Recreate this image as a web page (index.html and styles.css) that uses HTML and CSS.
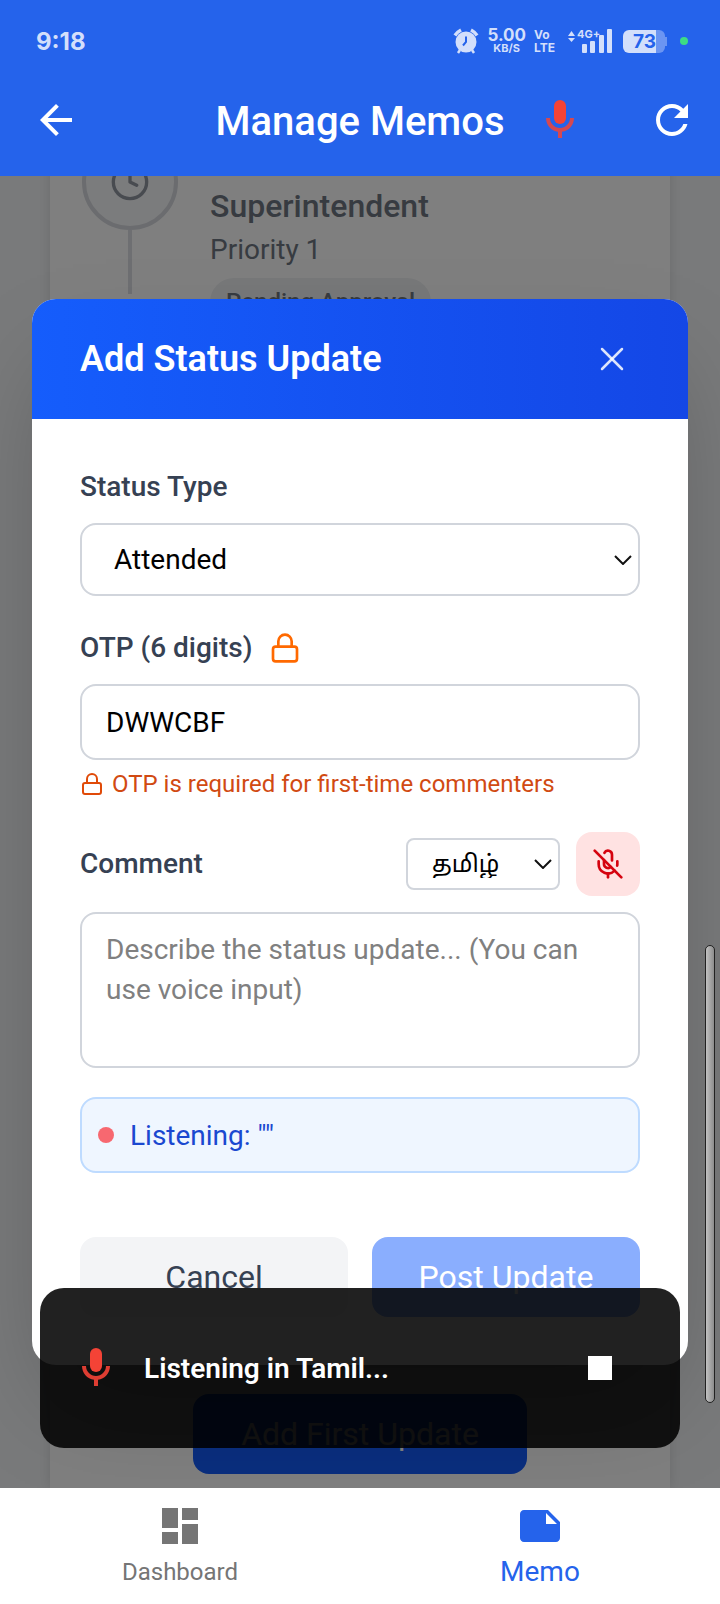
FILE: index.html
```html
<!DOCTYPE html>
<html lang="en">
<head>
<meta charset="utf-8">
<meta name="viewport" content="width=device-width, initial-scale=1">
<title>Manage Memos</title>
<link rel="stylesheet" href="styles.css">
</head>
<body class="app">
  <header class="top">
    <div class="status">
      <span class="clock">9:18</span>
      <div class="status-icons">
        <svg class="alarm" viewBox="0 0 26 26" aria-label="Alarm">
          <path d="M2 7.500A15 15 0 0 1 8 2M18 2a15 15 0 0 1 6 5.500" fill="none" stroke="#d3dffb" stroke-width="3.500"/>
          <path d="M7 22l-2 3M19 22l2 3" stroke="#d3dffb" stroke-width="2.500"/>
          <circle cx="13" cy="14" r="10.500" fill="#d3dffb"/>
          <path d="M13 8.500V14l-3 3.500" fill="none" stroke="#2563eb" stroke-width="2"/>
        </svg>
        <div class="duo speed"><span class="duo-big">5.00</span><span>KB/S</span></div>
        <div class="duo volte"><span>Vo</span><span>LTE</span></div>
        <div class="signal">
          <svg class="bars" viewBox="0 0 46 26" aria-label="Signal">
            <path d="M1 8l3.500-5L8 8zM1 10l3.500 4L8 10z" fill="#d3dffb"/>
            <rect x="15" y="16" width="5" height="9" rx="1" fill="#d3dffb"/>
            <rect x="23" y="13" width="5" height="12" rx="1" fill="#d3dffb"/>
            <rect x="32" y="7" width="5" height="18" rx="1" fill="#d3dffb"/>
            <rect x="40" y="1" width="5" height="24" rx="1" fill="#d3dffb"/>
          </svg>
          <span class="network">4G+</span>
        </div>
        <div class="battery"><span class="battery-level">73</span><span class="battery-tip"></span></div>
        <span class="live-dot"></span>
      </div>
    </div>
    <div class="bar">
      <button class="icon-btn" aria-label="Back"><svg class="i48" viewBox="0 0 24 24" fill="#fff"><path d="M20 11H7.830l5.590-5.590L12 4l-8 8 8 8 1.410-1.410L7.830 13H20v-2z"/></svg></button>
      <h1 class="title">Manage Memos</h1>
      <div class="bar-actions">
        <button class="icon-btn" aria-label="Voice"><svg class="i48" viewBox="0 0 24 24" fill="#f44336"><rect x="9" y="2" width="6" height="12" rx="3"/><path fill-opacity=".85" d="M17 11c0 2.760-2.240 5-5 5s-5-2.240-5-5H5c0 3.530 2.610 6.430 6 6.920V21h2v-3.080c3.390-.49 6-3.390 6-6.920h-2z"/></svg></button>
        <button class="icon-btn" aria-label="Refresh"><svg class="i48" viewBox="0 0 24 24" fill="#fff"><path d="M17.650 6.350C16.200 4.900 14.210 4 12 4c-4.420 0-7.990 3.580-7.990 8s3.570 8 7.990 8c3.730 0 6.840-2.550 7.730-6h-2.080c-.82 2.330-3.040 4-5.650 4-3.310 0-6-2.690-6-6s2.690-6 6-6c1.660 0 3.140.69 4.220 1.780L13 11h7V4l-2.350 2.350z"/></svg></button>
      </div>
    </div>
  </header>

  <main class="stage">
    <div class="page">
      <section class="card">
        <div class="step">
          <div class="step-rail">
            <div class="step-circle"><svg class="i40" viewBox="0 0 24 24" fill="none" stroke="#9096a0" stroke-width="2" stroke-linecap="round" stroke-linejoin="round"><circle cx="12" cy="12" r="10"/><path d="M12 6v6l4 2"/></svg></div>
            <div class="step-line"></div>
          </div>
          <div class="step-text">
            <h2 class="step-role">Superintendent</h2>
            <p class="step-priority">Priority 1</p>
            <span class="pill">Pending Approval</span>
          </div>
        </div>
        <button class="first-update">Add First Update</button>
      </section>
    </div>

    <div class="overlay">
      <form class="modal" role="dialog" aria-labelledby="modal-title">
        <div class="modal-head">
          <h2 class="modal-title" id="modal-title">Add Status Update</h2>
          <button class="icon-btn close" type="button" aria-label="Close"><svg class="i40" viewBox="0 0 24 24" fill="none" stroke="#fff" stroke-opacity=".85" stroke-width="1.500" stroke-linecap="round"><path d="M18 6L6 18"/><path d="M6 6l12 12"/></svg></button>
        </div>
        <div class="modal-body">
          <div class="field">
            <label class="label" for="type">Status Type</label>
            <div class="select-wrap">
              <select class="control type-select" id="type"><option>Attended</option></select>
              <svg class="chevron" viewBox="0 0 18 10" fill="none" stroke="#111" stroke-width="2"><path d="M1 1l8 8 8-8"/></svg>
            </div>
          </div>
          <div class="field">
            <label class="label" for="otp">OTP (6 digits)
              <svg class="i32" viewBox="0 0 24 24" fill="none" stroke="#ff6900" stroke-width="2" stroke-linecap="round" stroke-linejoin="round"><rect x="3" y="11" width="18" height="11" rx="2"/><path d="M7 11V7a5 5 0 0 1 10 0v4"/></svg>
            </label>
            <input class="control otp" id="otp" type="text" value="DWWCBF">
            <p class="hint">
              <svg class="i24" viewBox="0 0 24 24" fill="none" stroke="#e04a08" stroke-width="2" stroke-linecap="round" stroke-linejoin="round"><rect x="3" y="11" width="18" height="11" rx="2"/><path d="M7 11V7a5 5 0 0 1 10 0v4"/></svg>
              OTP is required for first-time commenters
            </p>
          </div>
          <div class="field field-last">
            <div class="comment-row">
              <label class="label" for="comment">Comment</label>
              <div class="select-wrap lang-wrap">
                <select class="control lang-select" aria-label="Voice language"><option>தமிழ்</option></select>
                <svg class="chevron" viewBox="0 0 18 10" fill="none" stroke="#111" stroke-width="2"><path d="M1 1l8 8 8-8"/></svg>
              </div>
              <button class="mic-off" type="button" aria-label="Stop voice input"><svg class="i32" viewBox="0 0 24 24" fill="none" stroke="#d5030f" stroke-width="2" stroke-linecap="round" stroke-linejoin="round"><path d="M2 2l20 20"/><path d="M18.890 13.230A7.120 7.120 0 0 0 19 12v-2"/><path d="M5 10v2a7 7 0 0 0 12 5"/><path d="M15 9.340V5a3 3 0 0 0-5.680-1.330"/><path d="M9 9v3a3 3 0 0 0 5.120 2.120"/><path d="M12 19v3"/></svg></button>
            </div>
            <textarea class="control comment" id="comment" placeholder="Describe the status update... (You can use voice input)"></textarea>
          </div>
          <div class="listening"><span class="rec-dot"></span>Listening: ""</div>
          <div class="actions">
            <button class="btn cancel" type="button">Cancel</button>
            <button class="btn post" type="submit">Post Update</button>
          </div>
        </div>
      </form>
    </div>

    <div class="scroll-thumb"></div>

    <div class="toast" role="status">
      <svg class="i48" viewBox="0 0 24 24" fill="#f44336"><rect x="9" y="2" width="6" height="12" rx="3"/><path fill-opacity=".9" d="M17 11c0 2.760-2.240 5-5 5s-5-2.240-5-5H5c0 3.530 2.610 6.430 6 6.920V21h2v-3.080c3.390-.49 6-3.390 6-6.920h-2z"/></svg>
      <span class="toast-text">Listening in Tamil...</span>
      <button class="icon-btn" aria-label="Stop"><svg class="i48" viewBox="0 0 24 24" fill="#fff"><path d="M6 6h12v12H6z"/></svg></button>
    </div>
  </main>

  <nav class="tabs">
    <a class="tab" href="#dashboard">
      <svg class="i48" viewBox="0 0 24 24" fill="#757575"><path d="M3 13h8V3H3v10zm0 8h8v-6H3v6zm10 0h8V11h-8v10zm0-18v6h8V3h-8z"/></svg>
      Dashboard
    </a>
    <a class="tab tab-active" href="#memo" aria-current="page">
      <svg class="i48" viewBox="0 0 24 24" fill="#2563eb"><path d="M22 10l-6-6H4c-1.100 0-2 .9-2 2v12.010c0 1.100.9 1.990 2 1.990h16c1.100 0 2-.9 2-2v-8zm-7-4.500l5.500 5.500H15V5.500z"/></svg>
      Memo
    </a>
  </nav>
</body>
</html>
```
FILE: styles.css
```css
* {
  box-sizing: border-box;
  margin: 0;
}

.app {
  display: flex;
  flex-direction: column;
  min-height: 100vh;
  font-family: Roboto, "Noto Sans Tamil", "Noto Sans", sans-serif;
  background: #fff;
}

button,
input,
select,
textarea {
  font-family: inherit;
}

.i24 { width: 24px; height: 24px; }
.i32 { width: 32px; height: 32px; }
.i40 { width: 40px; height: 40px; }
.i48 { width: 48px; height: 48px; }

svg {
  display: block;
  flex: none;
}

.icon-btn {
  padding: 0;
  border: 0;
  background: none;
}

/* Header */
.top {
  background: #2563eb;
  color: #fff;
}

.status {
  display: flex;
  justify-content: space-between;
  align-items: center;
  height: 64px;
  padding: 18px 32px 0 36px;
  color: #d3dffb;
  font-family: Inter, sans-serif;
}

.clock {
  font-size: 24px;
  font-weight: 700;
}

.status-icons {
  display: flex;
  align-items: center;
  font-weight: 700;
}

.alarm {
  width: 26px;
  height: 26px;
}

.duo {
  display: flex;
  flex-direction: column;
  align-items: center;
  margin-left: 8px;
  font-size: 11px;
  line-height: 11px;
}

.duo-big {
  font-size: 17px;
  line-height: 15px;
}

.volte {
  align-items: flex-start;
  font-size: 12px;
  line-height: 13px;
}

.signal {
  position: relative;
  margin-left: 12px;
}

.bars {
  width: 46px;
  height: 26px;
}

.network {
  position: absolute;
  top: 0;
  left: 10px;
  font-size: 11px;
  line-height: 12px;
}

.battery {
  display: flex;
  align-items: center;
  margin-left: 10px;
}

.battery-level {
  width: 42px;
  padding-right: 9px;
  border-radius: 6px;
  background: linear-gradient(to right, #d3dffb 33px, #6b95f2 33px);
  color: #2563eb;
  font-size: 19px;
  line-height: 23px;
  text-align: right;
}

.battery-tip {
  width: 2px;
  height: 9px;
  background: #6b95f2;
}

.live-dot {
  width: 8px;
  height: 8px;
  margin-left: 13px;
  border-radius: 50%;
  background: #3ddc84;
}

.bar {
  display: grid;
  grid-template-columns: 1fr auto 1fr;
  align-items: center;
  height: 112px;
  padding: 0 32px;
}

.title {
  padding-top: 4px;
  font-size: 40px;
  font-weight: 500;
  line-height: 48px;
}

.bar-actions {
  display: flex;
  justify-content: space-between;
  margin-right: -8px;
  padding-left: 32px;
}

/* Scrolled page behind the dialog */
.stage {
  position: relative;
  display: flex;
  flex: 1;
  flex-direction: column;
  overflow: hidden;
  background: #f3f5f7;
}

.page {
  display: flex;
  flex: 1;
  flex-direction: column;
  margin-top: -74px;
  padding: 0 50px;
}

.card {
  display: flex;
  flex: 1;
  flex-direction: column;
  justify-content: space-between;
  padding: 32px 32px 14px;
  background: #fff;
  box-shadow: 0 0 12px rgba(0, 0, 0, 0.12);
}

.step {
  display: flex;
  gap: 32px;
}

.step-rail {
  display: flex;
  flex-direction: column;
  align-items: center;
}

.step-circle {
  display: flex;
  align-items: center;
  justify-content: center;
  width: 96px;
  height: 96px;
  border: 4px solid #d6d9de;
  border-radius: 50%;
  background: #f7f8fa;
}

.step-line {
  width: 4px;
  height: 64px;
  background: #dcdfe4;
}

.step-text {
  padding-top: 48px;
  color: #6f7782;
}

.step-role {
  font-size: 32px;
  font-weight: 500;
  line-height: 48px;
}

.step-priority {
  font-size: 28px;
  line-height: 40px;
}

.pill {
  display: inline-block;
  margin-top: 8px;
  padding: 8px 16px;
  border-radius: 24px;
  background: #eff1f3;
  font-size: 24px;
  font-weight: 500;
  line-height: 32px;
}

.first-update {
  align-self: center;
  height: 80px;
  padding: 0 48px;
  border: 0;
  border-radius: 16px;
  background: #155dfc;
  color: #fff;
  font-size: 32px;
}

/* Dialog */
.overlay {
  position: absolute;
  inset: 0;
  display: flex;
  align-items: center;
  padding: 0 32px;
  background: rgba(0, 0, 0, 0.5);
}

.modal {
  flex: 1;
  overflow: hidden;
  border-radius: 24px;
  background: #fff;
  box-shadow: 0 50px 100px -24px rgba(0, 0, 0, 0.25);
}

.modal-head {
  display: flex;
  align-items: center;
  justify-content: space-between;
  height: 120px;
  padding: 0 56px 0 48px;
  background: linear-gradient(to right, #155dfc, #1447e6);
  color: #fff;
}

.modal-title {
  font-size: 36px;
  font-weight: 600;
}

.modal-body {
  padding: 48px;
}

.field {
  margin-bottom: 32px;
}

.field-last {
  margin-bottom: 29px;
}

.label {
  display: flex;
  align-items: center;
  gap: 16px;
  color: #364153;
  font-size: 28px;
  font-weight: 500;
  line-height: 40px;
}

.control {
  display: block;
  width: 100%;
  border: 2px solid #d1d5dc;
  border-radius: 16px;
  background: #fff;
  color: #000;
  font-size: 28px;
  appearance: none;
}

.field > .label {
  margin-bottom: 16px;
}

.select-wrap {
  position: relative;
}

.chevron {
  position: absolute;
  top: 50%;
  right: 8px;
  width: 18px;
  height: 10px;
  margin-top: -5px;
  pointer-events: none;
}

.type-select {
  height: 73px;
  padding: 0 32px;
}

.otp {
  height: 76px;
  padding: 0 24px;
}

.hint {
  display: flex;
  align-items: center;
  gap: 8px;
  margin-top: 8px;
  color: #d14a12;
  font-size: 24px;
  line-height: 32px;
}

.comment-row {
  display: flex;
  align-items: center;
  gap: 16px;
  margin-bottom: 16px;
}

.lang-wrap {
  margin-left: auto;
}

.lang-select {
  width: 154px;
  height: 52px;
  padding: 0 24px;
  border-radius: 8px;
  font-size: 24px;
}

.mic-off {
  display: flex;
  align-items: center;
  justify-content: center;
  width: 64px;
  height: 64px;
  border: 0;
  border-radius: 16px;
  background: #ffe2e2;
}

.comment {
  height: 156px;
  padding: 16px 24px;
  line-height: 40px;
  resize: none;
}

.comment::placeholder {
  color: #808080;
}

.listening {
  display: flex;
  align-items: center;
  gap: 16px;
  height: 76px;
  padding: 0 16px;
  border: 2px solid #bedbff;
  border-radius: 16px;
  background: #eff6ff;
  color: #1a48d0;
  font-size: 28px;
}

.rec-dot {
  width: 16px;
  height: 16px;
  border-radius: 50%;
  background: #f76870;
}

.actions {
  display: grid;
  grid-template-columns: 1fr 1fr;
  gap: 24px;
  margin-top: 64px;
}

.btn {
  height: 80px;
  border: 0;
  border-radius: 16px;
  font-size: 32px;
}

.cancel {
  background: #f3f4f6;
  color: #364153;
}

.post {
  background: #8aaefe;
  color: #fff;
}

.scroll-thumb {
  position: absolute;
  top: 769px;
  right: 5px;
  width: 10px;
  height: 458px;
  border: 1px solid #222;
  border-radius: 5px;
  background: linear-gradient(to right, #c2c2c2, #8c8c8c);
}

/* Voice notice */
.toast {
  position: absolute;
  right: 40px;
  bottom: 40px;
  left: 40px;
  display: flex;
  align-items: center;
  height: 160px;
  padding: 0 56px 0 32px;
  border-radius: 24px;
  background: rgba(0, 0, 0, 0.87);
  color: #fff;
}

.toast-text {
  flex: 1;
  padding-left: 24px;
  font-size: 28px;
  font-weight: 600;
}

/* Bottom tabs */
.tabs {
  display: grid;
  grid-template-columns: 1fr 1fr;
  height: 116px;
  background: #fff;
}

.tab {
  display: flex;
  flex-direction: column;
  align-items: center;
  gap: 4px;
  padding-top: 14px;
  color: #757575;
  font-size: 24px;
  line-height: 36px;
  text-decoration: none;
}

.tab-active {
  color: #2563eb;
  font-size: 28px;
}
```
